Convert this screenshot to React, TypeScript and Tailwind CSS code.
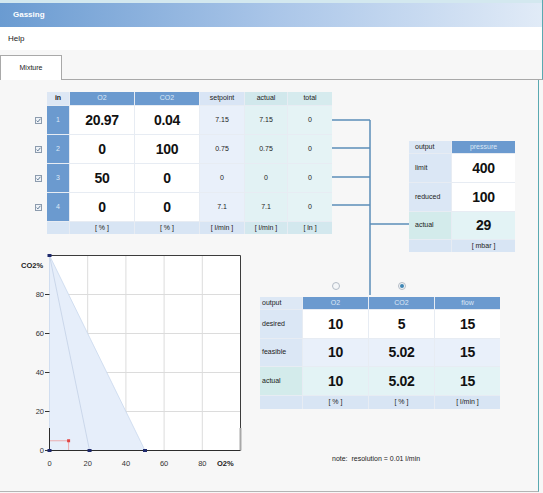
import React from 'react';

const inputs = [
  { n: '1', o2: '20.97', co2: '0.04', sp: '7.15', act: '7.15', tot: '0' },
  { n: '2', o2: '0', co2: '100', sp: '0.75', act: '0.75', tot: '0' },
  { n: '3', o2: '50', co2: '0', sp: '0', act: '0', tot: '0' },
  { n: '4', o2: '0', co2: '0', sp: '7.1', act: '7.1', tot: '0' },
];

const outputs = [
  { label: 'desired', o2: '10', co2: '5', flow: '15', lab: 'bg-[#dbe7f5]', val: 'bg-white' },
  { label: 'feasible', o2: '10', co2: '5.02', flow: '15', lab: 'bg-[#dbe7f5]', val: 'bg-[#e9f0fa]' },
  { label: 'actual', o2: '10', co2: '5.02', flow: '15', lab: 'bg-[#d3ebeb]', val: 'bg-[#e3f3f5]' },
];

const cell = 'flex items-center justify-center';
const big = 'text-[14px] font-bold tracking-[-0.3px] text-[#111]';
const small = 'text-[7px] text-[#222]';
const blueHead = 'bg-[#6b9acf] text-[7px] text-[#dce8f6]';

function CheckBox() {
  return (
    <span className="flex h-[7px] w-[7px] items-center justify-center border border-[#8d9cae] bg-[#eef2f7]">
      <svg width="5" height="5" viewBox="0 0 5 5">
        <path d="M0.6 2.6 L1.9 3.9 L4.4 0.8" fill="none" stroke="#56708c" strokeWidth="0.9" />
      </svg>
    </span>
  );
}

function Radio({ on }: { on?: boolean }) {
  return (
    <span className="flex h-[8px] w-[8px] items-center justify-center rounded-full border border-[#b4bcc6] bg-[#f4f6f8]">
      {on && <span className="h-[4px] w-[4px] rounded-full bg-[#3f86b4]" />}
    </span>
  );
}

function InputTable() {
  return (
    <div className="grid grid-cols-[22px_64px_64px_44px_42px_44px] grid-rows-[13px_28px_28px_28px_28px_12px] gap-px bg-[#e7ecf3]">
      <div className={`${cell} bg-[#dde7f4] text-[7px] font-bold text-[#222]`}>in</div>
      <div className={`${cell} ${blueHead}`}>O2</div>
      <div className={`${cell} ${blueHead}`}>CO2</div>
      <div className={`${cell} bg-[#d9e5f5] ${small}`}>setpoint</div>
      <div className={`${cell} bg-[#d1e8ec] ${small}`}>actual</div>
      <div className={`${cell} bg-[#d6ebee] ${small}`}>total</div>
      {inputs.map((r) => (
        <React.Fragment key={r.n}>
          <div className={`${cell} bg-[#6b9acf] text-[7px] text-[#dce8f6]`}>{r.n}</div>
          <div className={`${cell} bg-white ${big}`}>{r.o2}</div>
          <div className={`${cell} bg-white ${big}`}>{r.co2}</div>
          <div className={`${cell} bg-[#e9f0fa] ${small}`}>{r.sp}</div>
          <div className={`${cell} bg-[#e2f2f4] ${small}`}>{r.act}</div>
          <div className={`${cell} bg-[#e5f3f5] ${small}`}>{r.tot}</div>
        </React.Fragment>
      ))}
      <div className="bg-[#d8e5f4]" />
      <div className={`${cell} bg-[#d8e5f4] ${small}`}>[ % ]</div>
      <div className={`${cell} bg-[#d8e5f4] ${small}`}>[ % ]</div>
      <div className={`${cell} bg-[#d8e5f4] ${small}`}>[ l/min ]</div>
      <div className={`${cell} bg-[#d3e8ee] ${small}`}>[ l/min ]</div>
      <div className={`${cell} bg-[#d3e8ee] ${small}`}>[ ln ]</div>
    </div>
  );
}

function PressureTable() {
  return (
    <div className="grid grid-cols-[42px_63px] grid-rows-[12px_28px_28px_27px_12px] gap-px bg-[#e7ecf3]">
      <div className={`flex items-center bg-[#dde8f5] pl-[6px] ${small}`}>output</div>
      <div className={`${cell} ${blueHead}`}>pressure</div>
      <div className={`flex items-center bg-[#dbe7f5] pl-[6px] ${small}`}>limit</div>
      <div className={`${cell} bg-white ${big}`}>400</div>
      <div className={`flex items-center bg-[#dbe7f5] pl-[6px] ${small}`}>reduced</div>
      <div className={`${cell} bg-white ${big}`}>100</div>
      <div className={`flex items-center bg-[#d3ebeb] pl-[6px] ${small}`}>actual</div>
      <div className={`${cell} bg-[#e3f3f5] ${big}`}>29</div>
      <div className="bg-[#d8e5f4]" />
      <div className={`${cell} bg-[#d8e5f4] ${small}`}>[ mbar ]</div>
    </div>
  );
}

function OutputTable() {
  return (
    <div className="grid grid-cols-[42px_65px_65px_65px] grid-rows-[12px_28px_27px_28px_13px] gap-px bg-[#e7ecf3]">
      <div className={`flex items-center bg-[#dde8f5] pl-[2px] ${small}`}>output</div>
      <div className={`${cell} ${blueHead}`}>O2</div>
      <div className={`${cell} ${blueHead}`}>CO2</div>
      <div className={`${cell} ${blueHead}`}>flow</div>
      {outputs.map((r) => (
        <React.Fragment key={r.label}>
          <div className={`flex items-center pl-[2px] ${r.lab} ${small}`}>{r.label}</div>
          <div className={`${cell} ${r.val} ${big}`}>{r.o2}</div>
          <div className={`${cell} ${r.val} ${big}`}>{r.co2}</div>
          <div className={`${cell} ${r.val} ${big}`}>{r.flow}</div>
        </React.Fragment>
      ))}
      <div className="bg-[#d8e5f4]" />
      <div className={`${cell} bg-[#d8e5f4] ${small}`}>[ % ]</div>
      <div className={`${cell} bg-[#d8e5f4] ${small}`}>[ % ]</div>
      <div className={`${cell} bg-[#d8e5f4] ${small}`}>[ l/min ]</div>
    </div>
  );
}

const X = (v: number) => 49.5 + v * 1.91;
const Y = (v: number) => 198.5 - v * 1.95;

function Chart() {
  const ticks = [20, 40, 60, 80];
  const dots: [number, number][] = [[0, 100], [0, 0], [20.97, 0], [50, 0]];
  return (
    <svg width="250" height="222" viewBox="0 0 250 222" className="shrink-0">
      <rect x={X(0)} y={Y(100)} width={191} height={195} fill="#ffffff" />
      {ticks.map((t) => (
        <g key={t}>
          <line x1={X(t)} y1={Y(100)} x2={X(t)} y2={Y(0)} stroke="#dcdcdc" />
          <line x1={X(0)} y1={Y(t)} x2={X(100)} y2={Y(t)} stroke="#dcdcdc" />
        </g>
      ))}
      <polygon
        points={`${X(0)},${Y(100)} ${X(0)},${Y(0)} ${X(50)},${Y(0)}`}
        fill="#e6eefa"
        stroke="#c9d8ee"
        strokeWidth="0.8"
      />
      <line x1={X(0)} y1={Y(100)} x2={X(20.97)} y2={Y(0)} stroke="#c3d1e6" strokeWidth="0.8" />
      <polyline
        points={`${X(0)},${Y(5)} ${X(10)},${Y(5)} ${X(10)},${Y(0)}`}
        fill="none"
        stroke="#ee9c9c"
        strokeWidth="0.8"
      />
      <line x1={X(0)} y1={Y(100)} x2={X(100)} y2={Y(100)} stroke="#3c3c3c" />
      <line x1={X(100)} y1={Y(100)} x2={X(100)} y2={176} stroke="#3c3c3c" />
      <line x1={X(100)} y1={176} x2={X(100)} y2={Y(0)} stroke="#a8a8a8" strokeWidth="2" />
      <line x1={X(0)} y1={176} x2={X(0)} y2={Y(0)} stroke="#2c2c2c" />
      <line x1={X(0)} y1={Y(0)} x2={X(100)} y2={Y(0)} stroke="#2c2c2c" />
      {[0, ...ticks].map((t) => (
        <g key={`y${t}`}>
          <line x1={45} y1={Y(t)} x2={X(0)} y2={Y(t)} stroke="#333" />
          <text x={44} y={Y(t) + 2.6} textAnchor="end" fontSize="7.5" fill="#333">
            {t}
          </text>
          <text x={X(t)} y={214} textAnchor="middle" fontSize="7.5" fill="#333">
            {t}
          </text>
        </g>
      ))}
      <text x={21} y={16} fontSize="7.5" fontWeight="bold" fill="#222">
        CO2%
      </text>
      <text x={217} y={214} fontSize="7.5" fontWeight="bold" fill="#222">
        O2%
      </text>
      {dots.map(([a, b]) => (
        <rect key={`${a}-${b}`} x={X(a) - 2} y={Y(b) - 1.5} width="4" height="3" fill="#1f2a6c" />
      ))}
      <rect x={X(10) - 1.5} y={Y(5) - 1.5} width="3" height="3" fill="#e04444" />
    </svg>
  );
}

export default function App() {
  return (
    <div className="flex h-[493px] w-[543px] flex-col overflow-hidden bg-[#f7f7f7] font-['Liberation_Sans',Arial,sans-serif] text-[#222]">
      <div className="h-[3px] shrink-0 border-r border-[#5aa9b1] bg-[#d3e8ef]" />
      <div className="flex h-[24px] shrink-0 items-center border-r border-[#5aa9b1] bg-linear-to-r from-[#6a9bd1] via-[#a9c5e8] to-[#e1ebf7] pl-[13px] text-[8px] font-bold text-white">
        Gassing
      </div>
      <div className="flex h-[23px] shrink-0 items-center border-r border-[#5aa9b1] bg-white pl-[8px] text-[8px]">
        Help
      </div>
      <div className="flex h-[30px] shrink-0 items-end border-r border-b border-r-[#5aa9b1] border-b-[#a9a9a9] bg-[#f7f7f7]">
        <div className="-mb-px flex h-[25px] w-[62px] items-center justify-center border border-b-0 border-[#a9a9a9] bg-white text-[7px]">
          Mixture
        </div>
      </div>

      <div className="relative flex h-[412px] w-[539px] shrink-0 flex-col border-r border-b border-r-[#5aa9b1] border-b-[#b4b4b4]">
        <div className="flex items-start pt-[12px] pl-[35px]">
          <div className="flex w-[12px] flex-col">
            <div className="h-[14px]" />
            {inputs.map((r) => (
              <div key={r.n} className="mb-px flex h-[28px] items-center">
                <CheckBox />
              </div>
            ))}
          </div>
          <InputTable />
          <div className="mt-[49px] ml-[77px]">
            <PressureTable />
          </div>
        </div>

        <div className="flex items-start">
          <Chart />
          <div className="mt-[30px] ml-[10px] flex flex-col">
            <div className="grid h-[9px] grid-cols-[42px_65px_65px_65px] gap-px">
              <div />
              <div className="flex justify-center">
                <Radio />
              </div>
              <div className="flex justify-center">
                <Radio on />
              </div>
            </div>
            <div className="mt-[6px]">
              <OutputTable />
            </div>
            <div className="mt-[45px] ml-[72px] text-[7px] leading-[9px] text-[#222]">
              note:&nbsp; resolution = 0.01 l/min
            </div>
          </div>
        </div>

        <svg className="pointer-events-none absolute inset-0" width="539" height="412">
          {[40, 68, 97, 125].map((y) => (
            <line key={y} x1="332" y1={y} x2="370" y2={y} stroke="#5b8eb8" strokeWidth="1.5" />
          ))}
          <line x1="370" y1="40" x2="370" y2="215" stroke="#5b8eb8" strokeWidth="1.5" />
          <line x1="370" y1="144" x2="409" y2="144" stroke="#5b8eb8" strokeWidth="1.5" />
        </svg>
      </div>
    </div>
  );
}
